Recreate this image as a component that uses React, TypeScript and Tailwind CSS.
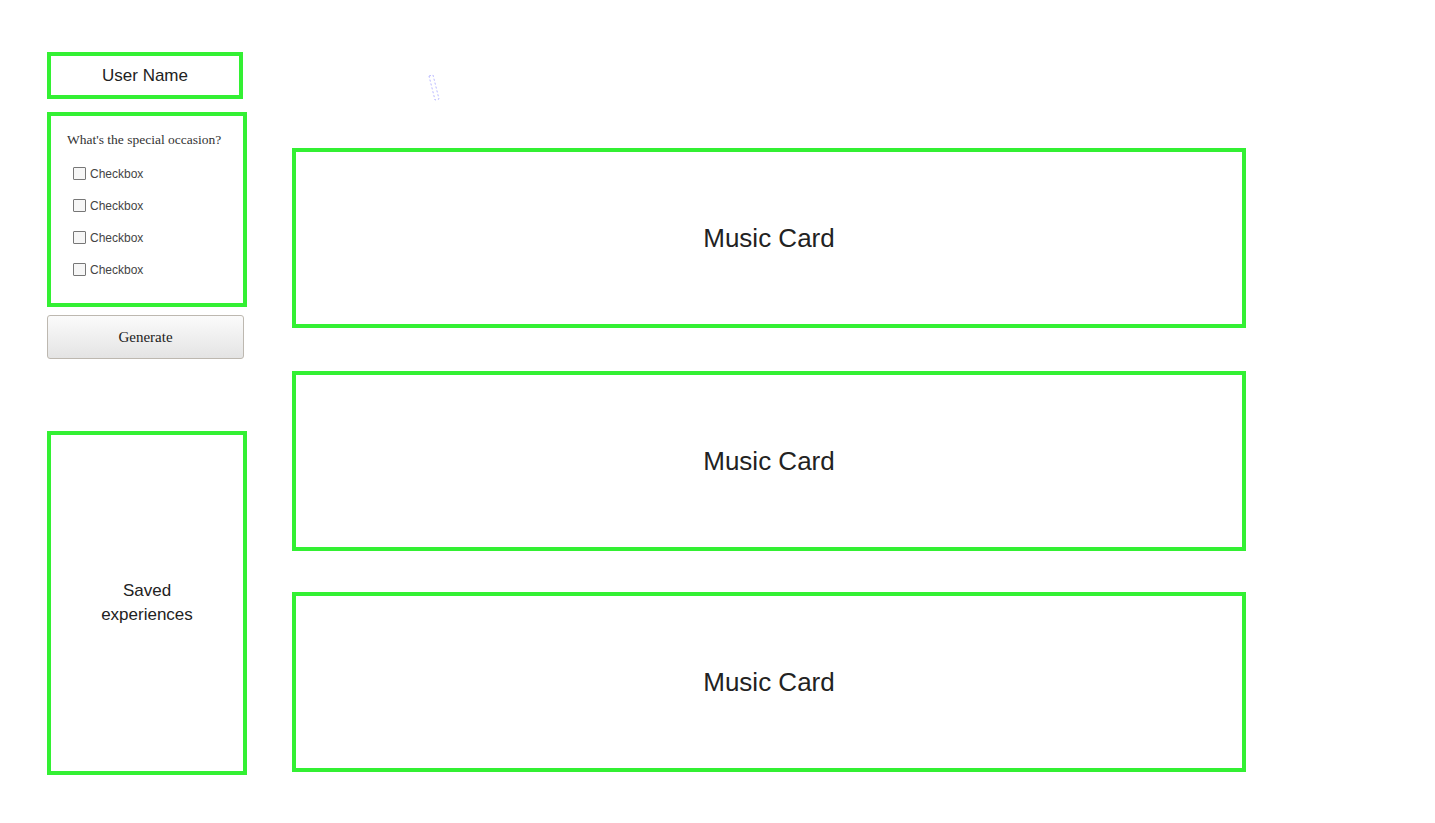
const sans = "font-['Liberation_Sans',Arial,sans-serif]";
const serif = "font-['Liberation_Serif','Times_New_Roman',serif]";

function MusicCard({ className = "" }: { className?: string }) {
  return (
    <div
      className={`flex h-[180px] w-[954px] items-center justify-center border-4 border-[#33f033] text-[26px] text-[#222] ${sans} ${className}`}
    >
      Music Card
    </div>
  );
}

export default function App() {
  const options = ["Checkbox", "Checkbox", "Checkbox", "Checkbox"];
  return (
    <div className="relative h-[823px] w-full overflow-hidden bg-white">
      <div className="flex pl-[47px]">
        <div className="flex w-[200px] flex-col pt-[52px]">
          <div
            className={`flex h-[47px] w-[196px] items-center justify-center border-4 border-[#33f033] text-[17px] text-[#222] ${sans}`}
          >
            User Name
          </div>

          <div className="mt-[13px] flex h-[195px] w-[200px] flex-col border-4 border-[#33f033] px-[16px] pt-[16px]">
            <p className={`text-[13.5px] leading-[16px] text-[#333] ${serif}`}>What's the special occasion?</p>
            <div className="mt-[19px] flex flex-col gap-[19px] pl-[6px]">
              {options.map((o, i) => (
                <label key={i} className={`flex h-[13px] items-center gap-[4px] text-[12px] text-[#444] ${sans}`}>
                  <span className="block h-[13px] w-[13px] rounded-[1px] border border-[#777] bg-[#f6f6f6]" />
                  {o}
                </label>
              ))}
            </div>
          </div>

          <button
            className={`mt-[8px] h-[44px] w-[197px] rounded-[3px] border border-[#bdb8b0] bg-gradient-to-b from-[#fbfbfb] to-[#e4e4e4] text-[15px] text-[#222] ${serif}`}
          >
            Generate
          </button>

          <div
            className={`mt-[72px] flex h-[344px] w-[200px] items-center justify-center border-4 border-[#33f033] text-center text-[17px] leading-[24px] text-[#222] ${sans}`}
          >
            Saved
            <br />
            experiences
          </div>
        </div>

        <div className="ml-[45px] flex flex-col pt-[148px]">
          <MusicCard />
          <MusicCard className="mt-[43px]" />
          <MusicCard className="mt-[41px]" />
        </div>
      </div>

      <svg className="absolute left-[426px] top-[74px]" width="16" height="28" viewBox="0 0 16 28">
        <path d="M3 2 L7 1 L13 25 L9 26 Z" fill="none" stroke="#b8b8ff" strokeWidth="1" strokeDasharray="2 2" />
      </svg>
    </div>
  );
}
